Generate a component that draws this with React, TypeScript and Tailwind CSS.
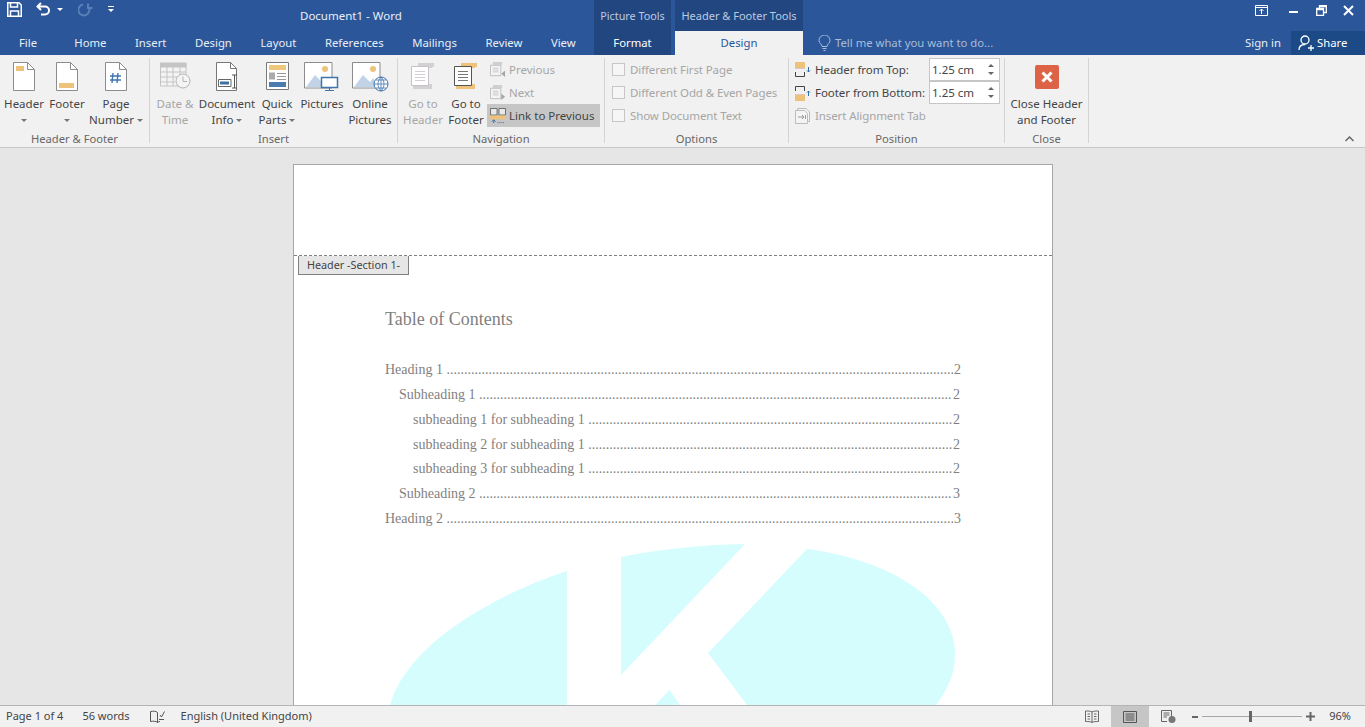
import type { ReactNode } from "react"

const tabs = ["Home", "Insert", "Design", "Layout", "References", "Mailings", "Review", "View"]

const tocRows = [
  { label: "Heading 1", page: "2", indent: "pl-0", dots: 145 },
  { label: "Subheading 1", page: "2", indent: "pl-[14px]", dots: 135 },
  { label: "subheading 1 for subheading 1", page: "2", indent: "pl-[28px]", dots: 104 },
  { label: "subheading 2 for subheading 1", page: "2", indent: "pl-[28px]", dots: 104 },
  { label: "subheading 3 for subheading 1", page: "2", indent: "pl-[28px]", dots: 104 },
  { label: "Subheading 2", page: "3", indent: "pl-[14px]", dots: 135 },
  { label: "Heading 2", page: "3", indent: "pl-0", dots: 145 },
]

function Caret({ className = "fill-[#777]" }: { className?: string }) {
  return (
    <svg width="6" height="3" viewBox="0 0 6 3" className={`inline-block ${className}`}>
      <path d="M0 0H6L3 3Z" />
    </svg>
  )
}

function PageIcon({ children }: { children?: ReactNode }) {
  return (
    <svg width="22" height="30" viewBox="0 0 22 30">
      <path d="M.5.5H14.5L21.5 7.5V28.5H.5Z" fill="#fff" stroke="#8c8c8c" />
      <path d="M14.5.5V7.5H21.5" fill="none" stroke="#8c8c8c" />
      {children}
    </svg>
  )
}

function DateIcon() {
  return (
    <svg width="31" height="28" viewBox="0 0 31 28" fill="none" stroke="#c4c4c4">
      <path d="M.5 1.5H26V24H.5Z" fill="#f4f4f4" />
      <path d="M0 1H26V5H0Z" fill="#c4c4c4" />
      <path d="M.5 10H26M.5 15H20M.5 20H15M7 5V24M13 5V24M20 5V15" />
      <circle cx="23" cy="19" r="7" fill="#f4f4f4" stroke="#b4b4b4" />
      <path d="M23 14.5V19.5H27" stroke="#b4b4b4" />
    </svg>
  )
}

function DocInfoIcon() {
  return (
    <svg width="23" height="30" viewBox="0 0 23 30" fill="none">
      <path d="M.5.5H14.5L20.5 6.5V28.5H.5Z" fill="#fff" stroke="#777" />
      <path d="M14.5.5V6.5H20.5" stroke="#777" />
      <path d="M2.5 17.5H15V24.5H2.5Z" fill="#fff" stroke="#666" />
      <path d="M4 19.5H13V22.5H4Z" fill="#41719f" />
      <path d="M16 13H21M18.500 13V26M16 26H21" stroke="#555" />
    </svg>
  )
}

function QuickPartsIcon() {
  return (
    <svg width="23" height="28" viewBox="0 0 23 28" fill="none">
      <path d="M.5.5H22.500V27.500H.5Z" fill="#fff" stroke="#7a7a7a" />
      <path d="M3 3H20V8H3Z" fill="#edc77c" />
      <path d="M3 10.500H9V17.500H3Z" fill="#ababab" />
      <path d="M11 11.500H20M11 14.500H20M11 17.500H20" stroke="#999" />
      <path d="M3 20H20V25H3Z" fill="#4a7dae" />
    </svg>
  )
}

function PictureBase({ children }: { children: ReactNode }) {
  return (
    <svg width="37" height="30" viewBox="0 0 37 30" fill="none">
      <path d="M.5.5H28V26H.5Z" fill="#fff" stroke="#8c8c8c" />
      <circle cx="21" cy="7" r="3" fill="#eec27b" />
      <path d="M2 25L11 13L18 20L21 16L27 25Z" fill="#c1d3e7" />
      {children}
    </svg>
  )
}

function GoToIcon({ active }: { active: boolean }) {
  const stroke = active ? "#555" : "#c9c1c9"
  const bar = active ? "#eec27b" : "#d2d2d2"
  return (
    <svg width="24" height="29" viewBox="0 0 24 29" fill="none">
      <path d="M7 1H23V5H21V6H7Z" fill={bar} />
      <path d="M2 22H21V27H2Z" fill={bar} />
      <path d="M.5 4.500H17.500V23.500H.5Z" fill="#fff" stroke={stroke} />
      <path d="M4 9.500H14M4 12.500H14M4 15.500H14M4 18.500H14" stroke={active ? "#777" : "#d5cdd5"} />
    </svg>
  )
}

function SmallPage({ arrow }: { arrow: "left" | "right" }) {
  return (
    <svg width="16" height="16" viewBox="0 0 17 17" fill="none">
      <path d="M3 0H13V3H3Z" fill="#cfcfcf" />
      <path d="M.5 3.500H11.500V14.500H.5Z" fill="#f4f4f4" stroke="#bcbcbc" />
      <path d="M3 6.500H9M3 8.500H9M3 10.500H9" stroke="#c8c8c8" />
      {arrow === "left" ? <path d="M16 9V16L12 12.500Z" fill="#a6a6a6" /> : <path d="M12 9V16L16 12.500Z" fill="#a6a6a6" />}
    </svg>
  )
}

function LinkIcon() {
  return (
    <svg width="16" height="16" viewBox="0 0 17 17" fill="none">
      <path d="M.5.500H7.500V7.500H.5ZM9.500.500H16.500V7.500H9.500Z" fill="#e8e8e8" stroke="#666" />
      <path d="M0 8H17V12H0Z" fill="#eec27b" />
      <path d="M4 16V13M2 14.500L4 12.500L6 14.500" stroke="#2f6ca8" />
      <path d="M8 15.500H16" stroke="#2f6ca8" strokeDasharray="1 1" />
    </svg>
  )
}

function HeaderTopIcon({ flip }: { flip?: boolean }) {
  return (
    <svg width="16" height="16" viewBox="0 0 16 16" fill="none" className={flip ? "-scale-y-100" : ""}>
      <path d="M0 0H10V6H0Z" fill="#eec27b" />
      <path d="M.5 6.500H9.500" stroke="#c99" strokeDasharray="1 1" />
      <path d="M.5 10V14.500H9.500V10" stroke="#444" />
      <path d="M13.500 5V10M12 8.500L13.500 10L15 8.500" stroke="#2f6ca8" />
    </svg>
  )
}

function LargeButton({
  width,
  icon,
  lines,
  disabled,
  caret,
  soloCaret,
}: {
  width: string
  icon: ReactNode
  lines: string[]
  disabled?: boolean
  caret?: boolean
  soloCaret?: boolean
}) {
  return (
    <div className={`flex shrink-0 flex-col items-center pt-[4px] ${width} ${disabled ? "text-[#a6a6a6]" : "text-[#444]"}`}>
      <div className="flex h-[32px] items-start justify-center">{icon}</div>
      <div className="mt-[2px] flex flex-col items-center whitespace-nowrap leading-[16px]">
        {lines.map((line, i) => (
          <div key={line} className="flex items-center gap-[3px]">
            {line}
            {caret && i === lines.length - 1 && <Caret />}
          </div>
        ))}
        {soloCaret && (
          <div className="flex h-[16px] items-center">
            <Caret />
          </div>
        )}
      </div>
    </div>
  )
}

function SmallRow({ icon, label, className = "" }: { icon: ReactNode; label: string; className?: string }) {
  return (
    <div className={`flex h-[23px] items-center gap-[3px] whitespace-nowrap pl-[3px] text-[#a6a6a6] ${className}`}>
      {icon}
      {label}
    </div>
  )
}

function Group({ width, label, children }: { width: string; label: string; children: ReactNode }) {
  return (
    <section className={`flex h-[85px] shrink-0 flex-col border-r border-[#d4d4d4] ${width}`}>
      <div className="flex min-h-0 flex-1">{children}</div>
      <div className="-mb-[3px] h-[14px] whitespace-nowrap text-center text-[11.200px] leading-[14px] text-[#666]">{label}</div>
    </section>
  )
}

function CheckRow({ label }: { label: string }) {
  return (
    <div className="flex h-[23px] items-center gap-[5px] whitespace-nowrap tracking-[-0.1px] text-[#a6a6a6]">
      <span className="h-[13px] w-[13px] border border-[#c6c6c6] bg-[#f6f6f6]" />
      {label}
    </div>
  )
}

function Spinner({ value }: { value: string }) {
  return (
    <div className="flex h-[23px] w-[71px] items-center justify-between border border-[#c6c6c6] bg-white pl-[2px] pr-[5px] text-[#444]">
      {value}
      <span className="flex flex-col gap-[5px]">
        <Caret className="rotate-180 fill-[#666]" />
        <Caret className="fill-[#666]" />
      </span>
    </div>
  )
}

export default function App() {
  return (
    <div className="flex h-screen flex-col overflow-hidden bg-[#e6e6e6] font-['Noto_Sans',sans-serif] text-[11.500px]">
      {/* Title bar + tabs */}
      <header className="h-[55px] shrink-0 bg-[#2b579a] text-[#e9eef6]">
        <div className="flex h-[31px]">
          <div className="flex w-[300px] shrink-0 items-start pl-[7px] pt-[2px]">
            <svg width="15" height="15" viewBox="0 0 15 15" fill="none" stroke="#fff" strokeWidth="1.500">
              <path d="M.75.75H12L14.250 3V14.250H.75Z" />
              <path d="M3.500 1V5H10.500V1M3.500 14V9H11.500V14" />
            </svg>
            <svg width="15" height="14" viewBox="0 0 15 14" fill="none" stroke="#fff" strokeWidth="2" className="ml-[14px]">
              <path d="M5 1L1.500 4.500L5 8M2 4.500H9A4 4 0 0 1 9 12.500H5" />
            </svg>
            <Caret className="ml-[6px] mt-[6px] fill-white" />
            <svg width="15" height="15" viewBox="0 0 15 15" fill="none" stroke="#5a80b8" strokeWidth="2" className="ml-[15px]">
              <path d="M10 1.500V6H14.500M10.500 5A5.500 5.500 0 1 1 5 2.500" />
            </svg>
            <span className="ml-[15px] mt-[4px] flex flex-col gap-[2px]">
              <span className="h-px w-[6px] bg-white" />
              <Caret className="fill-white" />
            </span>
          </div>
          <div className="w-[294px] shrink-0 pt-[6px] leading-[20px]">Document1 - Word</div>
          <div className="flex w-[77px] shrink-0 justify-center bg-[#224680] pt-[6px] text-[10.800px] leading-[20px] text-[#bccbe0]">Picture Tools</div>
          <div className="ml-[4px] flex w-[128px] shrink-0 justify-center bg-[#224680] pt-[6px] text-[11px] leading-[20px] text-[#bccbe0]">Header &amp; Footer Tools</div>
          <div className="ml-auto flex pr-[1px]">
            <div className="flex w-[33px] justify-center pr-[2px] pt-[4px]">
              <svg width="13" height="13" viewBox="0 0 13 13" fill="none" stroke="#fff">
                <path d="M.5 1.500H12.500V11.500H.5ZM1 3.500H12M6.500 10V5M4.500 7L6.500 5L8.500 7" />
              </svg>
            </div>
            <div className="flex w-[28px] justify-center pt-[11px]">
              <span className="h-[2px] w-[9px] bg-white" />
            </div>
            <div className="flex w-[28px] justify-center pt-[5px]">
              <svg width="11" height="11" viewBox="0 0 11 11" fill="none" stroke="#fff" strokeWidth="1.300">
                <path d="M.7 3.500H7.500V10.300H.7ZM3.500 3.500V.7H10.300V7.500H7.500M.7 4.500H7.500M3.500 1.500H10.300" />
              </svg>
            </div>
            <div className="flex w-[29px] justify-center pl-[2px] pr-[5px] pt-[5px]">
              <svg width="11" height="11" viewBox="0 0 11 11" stroke="#fff" strokeWidth="2">
                <path d="M1 1L10 10M10 1L1 10" />
              </svg>
            </div>
          </div>
        </div>
        <div className="flex h-[24px] text-[11.300px] leading-[24px]">
          <div className="w-[56px] shrink-0 text-center">File</div>
          <nav className="ml-[4px] flex w-[534px] shrink-0">
            {tabs.map((tab) => (
              <div key={tab} className="px-[14.300px]">
                {tab}
              </div>
            ))}
          </nav>
          <div className="w-[77px] shrink-0 bg-[#224680] text-center text-white">Format</div>
          <div className="ml-[4px] w-[128px] shrink-0 bg-[#f1f1f1] text-center text-[#2b579a]">Design</div>
          <div className="ml-[15px] flex items-center gap-[4px] text-[#a9bcd8]">
            <svg width="13" height="17" viewBox="0 0 13 17" fill="none" stroke="#a9bcd8">
              <path d="M4 11.500C4 9 1 8.500 1 5.500A5.500 5.500 0 0 1 12 5.500C12 8.500 9 9 9 11.500ZM4.500 13.500H8.500M5.500 15.500H7.500" />
            </svg>
            Tell me what you want to do...
          </div>
          <div className="ml-auto w-[36px] whitespace-nowrap text-center">Sign in</div>
          <div className="ml-[10px] flex h-[24px] w-[74px] items-center gap-[3px] bg-[#1c4a86] pl-[7px] text-white">
            <svg width="16" height="16" viewBox="0 0 16 16" fill="none" stroke="#fff" strokeWidth="1.300">
              <circle cx="7" cy="5" r="4" />
              <path d="M1 15C1 11 4 9.500 7 9.500M10 13H16M13 10V16" />
            </svg>
            Share
          </div>
        </div>
      </header>

      {/* Ribbon */}
      <div className="relative flex h-[93px] shrink-0 border-b border-[#c6c6c6] bg-[#f1f1f1] pt-[3px]">
        <Group width="w-[150px]" label="Header & Footer">
          <LargeButton
            width="w-[48px]"
            lines={["Header"]}
            soloCaret
            icon={
              <PageIcon>
                <path d="M3 4H11V9H3Z" fill="#eec27b" />
              </PageIcon>
            }
          />
          <LargeButton
            width="w-[38px]"
            lines={["Footer"]}
            soloCaret
            icon={
              <PageIcon>
                <path d="M3 21H18V26H3Z" fill="#eec27b" />
              </PageIcon>
            }
          />
          <LargeButton
            width="w-[60px]"
            lines={["Page", "Number"]}
            caret
            icon={
              <PageIcon>
                <path d="M8 11L7 21M13 11L12 21M5 14H16M5 18H16" stroke="#3f74ad" strokeWidth="1.400" fill="none" />
              </PageIcon>
            }
          />
        </Group>
        <Group width="w-[248px]" label="Insert">
          <LargeButton width="w-[50px]" lines={["Date &", "Time"]} disabled icon={<DateIcon />} />
          <LargeButton width="w-[54px]" lines={["Document", "Info"]} caret icon={<DocInfoIcon />} />
          <LargeButton width="w-[46px]" lines={["Quick", "Parts"]} caret icon={<QuickPartsIcon />} />
          <LargeButton
            width="w-[44px]"
            lines={["Pictures"]}
            icon={
              <PictureBase>
                <path d="M17.500 15.500H33.500V25.500H17.500Z" fill="#fff" stroke="#3f74ad" strokeWidth="1.500" />
                <path d="M25.500 26V28M21 28.500H30" stroke="#3f74ad" />
              </PictureBase>
            }
          />
          <LargeButton
            width="w-[52px]"
            lines={["Online", "Pictures"]}
            icon={
              <PictureBase>
                <circle cx="29" cy="22" r="7" fill="#fff" stroke="#3f74ad" />
                <path d="M22 22H36M29 15V29M24 18H34M24 26H34M29 15C25 19 25 25 29 29C33 25 33 19 29 15" stroke="#3f74ad" strokeWidth=".8" />
              </PictureBase>
            }
          />
        </Group>
        <Group width="w-[207px]" label="Navigation">
          <LargeButton width="w-[50px]" lines={["Go to", "Header"]} disabled icon={<GoToIcon active={false} />} />
          <LargeButton width="w-[36px]" lines={["Go to", "Footer"]} icon={<GoToIcon active />} />
          <div className="ml-[3px] w-[113px] shrink-0">
            <SmallRow icon={<SmallPage arrow="left" />} label="Previous" />
            <SmallRow icon={<SmallPage arrow="right" />} label="Next" />
            <SmallRow icon={<LinkIcon />} label="Link to Previous" className="bg-[#c6c6c6] !text-[#444]" />
          </div>
        </Group>
        <Group width="w-[184px]" label="Options">
          <div className="pl-[7px]">
            <CheckRow label="Different First Page" />
            <CheckRow label="Different Odd & Even Pages" />
            <CheckRow label="Show Document Text" />
          </div>
        </Group>
        <Group width="w-[216px]" label="Position">
          <div className="pl-[6px]">
            <div className="flex h-[23px] items-center text-[#444]">
              <HeaderTopIcon />
              <span className="ml-[4px] w-[114px] whitespace-nowrap tracking-[-0.05px]">Header from Top:</span>
              <Spinner value="1.25 cm" />
            </div>
            <div className="flex h-[23px] items-center text-[#444]">
              <HeaderTopIcon flip />
              <span className="ml-[4px] w-[114px] whitespace-nowrap tracking-[-0.05px]">Footer from Bottom:</span>
              <Spinner value="1.25 cm" />
            </div>
            <div className="flex h-[23px] items-center whitespace-nowrap tracking-[-0.1px] text-[#a6a6a6]">
              <svg width="16" height="16" viewBox="0 0 16 16" fill="none" stroke="#bcbcbc">
                <path d="M.5 2.500H9.500L12.500 5.500V15.500H.5ZM2.500 2.500V.5H11L14.500 4V13.500H12.500" fill="#f4f4f4" />
                <path d="M3 9H9M7 7L9 9L7 11M10.500 7V11" stroke="#999" />
              </svg>
              <span className="ml-[4px]">Insert Alignment Tab</span>
            </div>
          </div>
        </Group>
        <Group width="w-[84px]" label="Close">
          <LargeButton
            width="w-full"
            lines={["Close Header", "and Footer"]}
            icon={
              <div className="mt-[3px] flex h-[24px] w-[24px] items-center justify-center rounded-[2px] bg-[#dc6345]">
                <svg width="12" height="12" viewBox="0 0 12 12" stroke="#fff" strokeWidth="3">
                  <path d="M1.500 1.500L10.500 10.500M10.500 1.500L1.500 10.500" />
                </svg>
              </div>
            }
          />
        </Group>
        <svg width="9" height="6" viewBox="0 0 9 6" fill="none" stroke="#666" strokeWidth="1.500" className="absolute bottom-[5px] right-[11px]">
          <path d="M.5 5L4.500 1L8.500 5" />
        </svg>
      </div>

      {/* Document */}
      <main className="flex min-h-0 flex-1 justify-center overflow-hidden pr-[19px] pt-[16px]">
        <div className="relative h-[700px] w-[760px] shrink-0 border border-[#a6a6a6] bg-white font-['Liberation_Serif',serif] text-[14px] text-[#7f7f7f]">
          <svg width="758" height="540" viewBox="294 165 758 540" className="absolute left-0 top-0" fill="#d5fdfe">
            <path d="M567 571C480 600 405 650 390 705H567Z" />
            <path d="M621 557C660 549 700 545 745 544L621 675Z" />
            <path d="M807 549C890 560 955 600 955 655C955 675 947 690 936 705H747L708 653Z" />
            <path d="M655 705L669.500 690L680 705Z" />
          </svg>
          <div className="h-[91px] border-b border-dashed border-[#808080]" />
          <div className="relative ml-[4px] flex h-[19px] w-[111px] items-center justify-center border border-t-0 border-[#808080] bg-[#e6e6e6] font-['Noto_Sans',sans-serif] text-[10.800px] text-[#444]">
            Header -Section 1-
          </div>
          <div className="relative pl-[91px] pr-[92px]">
            <h1 className="mt-[32px] text-[18px] font-normal leading-[24px]">Table of Contents</h1>
            <ul className="mt-[27px]">
              {tocRows.map((row) => (
                <li key={row.label} className={`flex h-[24.750px] items-center justify-between whitespace-pre leading-[24px] ${row.indent}`}>
                  <span>
                    {row.label} {".".repeat(row.dots)}
                  </span>
                  <span>{row.page}</span>
                </li>
              ))}
            </ul>
          </div>
        </div>
      </main>

      {/* Status bar */}
      <footer className="flex h-[22px] shrink-0 items-center border-t border-[#b4b4b4] bg-[#f1f1f1] text-[11px] text-[#444]">
        <span className="ml-[6px]">Page 1 of 4</span>
        <span className="ml-[19px]">56 words</span>
        <svg width="15" height="13" viewBox="0 0 15 13" fill="none" stroke="#555" className="ml-[20px]">
          <path d="M7.500 2.500C6 1 3 1 .5 1.500V11.500C3 11 6 11 7.500 12.500V2.500ZM7.500 12.500C8 12 9 11.500 10 11.500M10 5L11.500 7L14.500 1.500M9 9.500H14" />
        </svg>
        <span className="ml-[16px]">English (United Kingdom)</span>
        <div className="ml-auto flex h-full items-center">
          <svg width="14" height="13" viewBox="0 0 14 13" fill="none" stroke="#666">
            <path d="M.5 1C3 1 6 1 7 2C8 1 11 1 13.500 1V11.500C11 11.500 8 11.500 7 12.500C6 11.500 3 11.500 .5 11.500ZM7 2V12.500M2.500 4H5M2.500 6.500H5M2.500 9H5M9 4H11.500M9 6.500H11.500M9 9H11.500" />
          </svg>
          <div className="ml-[12px] flex h-full w-[38px] items-center justify-center bg-[#c6c6c6]">
            <svg width="14" height="12" viewBox="0 0 14 12" fill="none" stroke="#555">
              <path d="M.5.5H13.500V11.500H.5ZM2.500 3H11.500M2.500 5H11.500M2.500 7H11.500M2.500 9H11.500" />
            </svg>
          </div>
          <svg width="15" height="13" viewBox="0 0 15 13" fill="none" stroke="#666" className="ml-[12px]">
            <path d="M.5.5H10.500V9M.5.5V11.500H6M2.500 3H8.500M2.500 5H8.500M2.500 7H6" />
            <circle cx="11" cy="9.500" r="3.500" fill="#777" stroke="none" />
          </svg>
          <span className="ml-[16px] h-[2px] w-[6px] bg-[#666]" />
          <div className="relative ml-[4px] h-px w-[100px] bg-[#a6a6a6]">
            <span className="absolute left-[47px] top-[-5px] h-[11px] w-[3px] bg-[#666]" />
          </div>
          <svg width="9" height="9" viewBox="0 0 9 9" stroke="#666" strokeWidth="2" className="ml-[4px]">
            <path d="M0 4.500H9M4.500 0V9" />
          </svg>
          <span className="ml-[14px] mr-[14px]">96%</span>
        </div>
      </footer>
    </div>
  )
}
